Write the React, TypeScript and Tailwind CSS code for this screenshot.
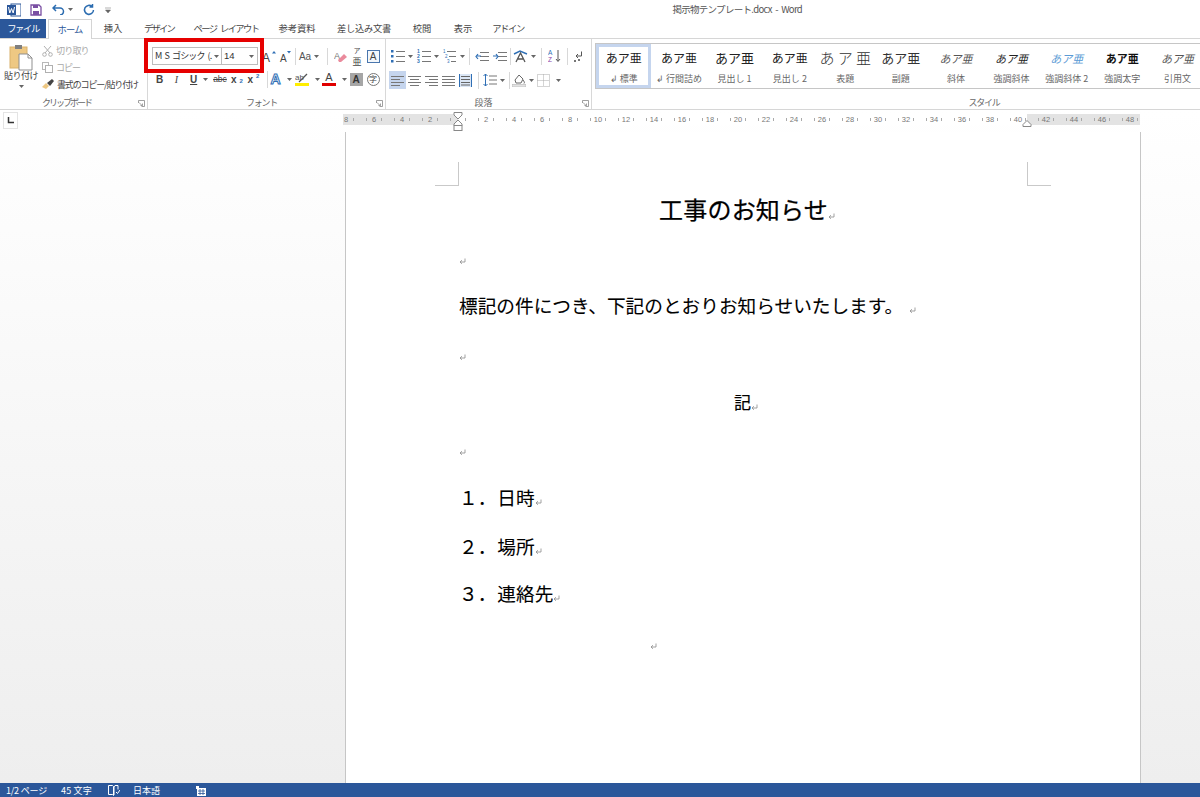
import React from 'react';

const FONT = "font-['Noto_Sans_CJK_JP','Noto_Sans',sans-serif]";

const tabs = [
  { label: '挿入', w: 'w-[42px]', track: '' },
  { label: 'デザイン', w: 'w-[50px]', track: 'tracking-[-1.800px]' },
  { label: 'ページ レイアウト', w: 'w-[84px]', track: 'tracking-[-1.600px] [word-spacing:3px]' },
  { label: '参考資料', w: 'w-[58px]', track: '' },
  { label: '差し込み文書', w: 'w-[76px]', track: 'tracking-[-0.300px]' },
  { label: '校閲', w: 'w-[40px]', track: '' },
  { label: '表示', w: 'w-[42px]', track: '' },
  { label: 'アドイン', w: 'w-[48px]', track: 'tracking-[-1.400px]' },
];

const styles = [
  { top: 'あア亜', sub: '↲ 標準', cls: 'text-[12px] text-[#222]' },
  { top: 'あア亜', sub: '↲ 行間詰め', cls: 'text-[12px] text-[#222]' },
  { top: 'あア亜', sub: '見出し 1', cls: 'text-[13px] text-[#222]' },
  { top: 'あア亜', sub: '見出し 2', cls: 'text-[12px] text-[#222]' },
  { top: 'あ ア 亜', sub: '表題', cls: 'text-[15px] text-[#333] font-light' },
  { top: 'あア亜', sub: '副題', cls: 'text-[13px] text-[#333]' },
  { top: 'あア亜', sub: '斜体', cls: 'text-[11px] italic text-[#555]' },
  { top: 'あア亜', sub: '強調斜体', cls: 'text-[11px] italic text-[#222]' },
  { top: 'あア亜', sub: '強調斜体 2', cls: 'text-[11px] italic text-[#5b9bd5]' },
  { top: 'あア亜', sub: '強調太字', cls: 'text-[11px] font-bold text-[#111]' },
  { top: 'あア亜', sub: '引用文', cls: 'text-[11px] italic text-[#555]' },
];

const Caret = () => (
  <svg width="5" height="3" viewBox="0 0 5 3" className="shrink-0">
    <path d="M0 0h5L2.5 3z" fill="#666" />
  </svg>
);

const Sep = ({ className = '' }: { className?: string }) => <div className={`w-px h-[17px] bg-[#d8d8d8] shrink-0 ${className}`} />;

const Cell = ({ w, children, className = '' }: { w: string; children?: React.ReactNode; className?: string }) => (
  <div className={`${w} h-[18px] flex items-center justify-center gap-[3px] shrink-0 ${className}`}>{children}</div>
);

// lines used for list and alignment buttons
const Lines = ({ kind }: { kind: 'left' | 'center' | 'right' | 'justify' }) => {
  const rows = [
    [0, 13],
    kind === 'left' ? [0, 9] : kind === 'center' ? [2, 11] : kind === 'right' ? [4, 13] : [0, 13],
    [0, 13],
    kind === 'left' ? [0, 9] : kind === 'center' ? [2, 11] : kind === 'right' ? [4, 13] : [0, 13],
  ];
  return (
    <svg width="13" height="11" viewBox="0 0 13 11">
      {rows.map((r, i) => (
        <rect key={i} x={r[0]} y={i * 3 + 1} width={r[1] - r[0]} height="1" fill="#777" />
      ))}
    </svg>
  );
};

const ListIcon = ({ kind = 'bullet' }: { kind?: 'bullet' | 'number' | 'multi' }) => (
  <svg width="14" height="13" viewBox="0 0 14 13" className="overflow-visible">
    {[1, 6, 11].map((y, i) => (
      <g key={y}>
        {kind === 'bullet' && <rect x="0" y={y - 1} width="2.500" height="2.500" fill="#2f6fb5" />}
        {kind === 'number' && (
          <text x="0" y={y + 1.500} fontSize="5" fontWeight="bold" fill="#2f6fb5" fontFamily="Liberation Sans">
            {i + 1}
          </text>
        )}
        {kind === 'multi' && (
          <text x={i * 2} y={y + 1.500} fontSize="4.500" fill="#2f6fb5" fontFamily="Liberation Sans">
            {i + 1}
          </text>
        )}
        <rect x={kind === 'multi' ? i * 2 + 4 : 5} y={y} width={kind === 'multi' ? 9 - i * 2 : 9} height="1" fill="#777" />
      </g>
    ))}
  </svg>
);

const IndentIcon = ({ flip = false }: { flip?: boolean }) => (
  <svg width="14" height="11" viewBox="0 0 14 11">
    {[1, 5, 9].map(y => (
      <rect key={y} x="5" y={y} width="9" height="1" fill="#777" />
    ))}
    <path d={flip ? 'M0 5h5M3 3l2 2.5L3 8' : 'M6 5H1M3 3L1 5.5 3 8'} stroke="#2f6fb5" strokeWidth="1.200" fill="none" />
  </svg>
);

const Ret = () => (
  <svg width="7" height="7" viewBox="0 0 7 7" className="inline-block shrink-0">
    <path d="M6 0.500V4H1.200M3 2.200L1 4l2 1.800" stroke="#8a8a8a" strokeWidth="0.800" fill="none" />
  </svg>
);

const Launcher = () => (
  <svg width="7" height="7" viewBox="0 0 7 7" className="shrink-0">
    <path d="M0.500 3V0.500H6.500V6.500H3.500" stroke="#888" strokeWidth="0.800" fill="none" />
    <path d="M1 2.500l3 3M4.500 3.500v2h-2" stroke="#888" strokeWidth="0.800" fill="none" />
  </svg>
);

const GroupLabel = ({ text, launcher = true, className = '' }: { text: string; launcher?: boolean; className?: string }) => (
  <div className="h-[14px] pt-[2px] relative flex items-center justify-center text-[9px] text-[#666]">
    <span className={className}>{text}</span>
    {launcher && (
      <span className="absolute right-[2px] top-[5px] flex">
        <Launcher />
      </span>
    )}
  </div>
);

const ClipboardGroup = () => (
  <div className="w-[148px] shrink-0 flex flex-col border-r border-[#d8d8d8]">
    <div className="flex-1 flex pl-[2px]">
      <div className="w-[38px] pt-[5px] flex flex-col items-center">
        <svg width="24" height="27" viewBox="0 0 24 27">
          <rect x="1" y="3" width="17" height="21" fill="#eec883" stroke="#d9b26c" />
          <rect x="6" y="1" width="7" height="4" fill="#7f7f7f" />
          <path d="M10 10h9l4 4v12H10z" fill="#fff" stroke="#8f8f8f" />
          <path d="M19 10v4h4" fill="none" stroke="#8f8f8f" />
        </svg>
        <div className="text-[9px] text-[#444] leading-[10px] whitespace-nowrap tracking-[-0.500px]">貼り付け</div>
        <div className="mt-[4px] flex">
          <Caret />
        </div>
      </div>
      <div className="flex flex-col pl-[2px] pt-[3px] text-[9px] leading-[17px]">
        <div className="flex items-center gap-[3px] text-[#a8a8a8] h-[17px] tracking-[-0.800px]">
          <svg width="11" height="12" viewBox="0 0 11 12">
            <path d="M2 1l6 7M9 1L3 8" stroke="#b0b0b0" fill="none" />
            <circle cx="2.500" cy="9.500" r="1.800" stroke="#b0b0b0" fill="none" />
            <circle cx="8.500" cy="9.500" r="1.800" stroke="#b0b0b0" fill="none" />
          </svg>
          切り取り
        </div>
        <div className="flex items-center gap-[3px] text-[#a8a8a8] h-[17px] tracking-[-1px]">
          <svg width="11" height="11" viewBox="0 0 11 11">
            <rect x="0.500" y="0.500" width="6" height="7" fill="#fff" stroke="#b8b8b8" />
            <rect x="3.500" y="3.500" width="7" height="7" fill="#fff" stroke="#b0b0b0" />
          </svg>
          コピー
        </div>
        <div className="flex items-center gap-[3px] text-[#444] h-[17px] whitespace-nowrap tracking-[-1.150px]">
          <svg width="12" height="11" viewBox="0 0 12 11">
            <path d="M0 8l4-4 3 3-3 3z" fill="#eec883" />
            <path d="M5 4l5-4 2 2-4 5z" fill="#444" />
          </svg>
          書式のコピー/貼り付け
        </div>
      </div>
    </div>
    <GroupLabel text="クリップボード" className="pr-[14px] tracking-[-2px]" />
  </div>
);

const FontGroup = () => (
  <div className="w-[238px] shrink-0 flex flex-col border-r border-[#d8d8d8]">
    <div className="flex-1 flex flex-col pt-[8px] gap-[5px]">
      <div className="flex items-center h-[18px] pl-[4px]">
        <div className="w-[70px] h-[18px] border border-[#bdbdbd] flex items-center justify-between pl-[2px] pr-[2px] text-[9px] text-[#333] whitespace-nowrap tracking-[-0.900px] [word-spacing:2px]">
          <span>M S ゴシック (.</span>
          <Caret />
        </div>
        <div className="w-[36px] h-[18px] border border-l-0 border-[#bdbdbd] flex items-center justify-between pl-[2px] pr-[3px] text-[9.500px] text-[#333] font-['Liberation_Sans',sans-serif]">
          <span>14</span>
          <Caret />
        </div>
        <Cell w="w-[17px]" className="ml-[3px]">
          <svg width="15" height="13" viewBox="0 0 15 13" className="overflow-visible">
            <text x="0" y="12" fontSize="12" fill="#444" fontFamily="Liberation Sans">A</text>
            <path d="M10 3.500l2-2.500 2 2.500z" fill="#2f6fb5" />
          </svg>
        </Cell>
        <Cell w="w-[16px]">
          <svg width="14" height="13" viewBox="0 0 14 13">
            <text x="1" y="12" fontSize="10" fill="#444" fontFamily="Liberation Sans">A</text>
            <path d="M8 1h4L10 3.500z" fill="#2f6fb5" />
          </svg>
        </Cell>
        <Sep className="ml-[1px]" />
        <Cell w="w-[26px]" className="text-[10px] text-[#555] font-['Liberation_Sans',sans-serif]">
          Aa <Caret />
        </Cell>
        <Sep className="ml-[5px]" />
        <Cell w="w-[22px]" className="ml-[2px]">
          <svg width="14" height="13" viewBox="0 0 14 13">
            <text x="0" y="9" fontSize="9" fill="#777" fontFamily="Liberation Sans">A</text>
            <path d="M4 10l6-6 3 3-6 5H5z" fill="#ea8a9c" />
          </svg>
        </Cell>
        <Cell w="w-[10px]" className="text-[9px] text-[#444] flex-col gap-0 leading-[8px]">
          <span className="text-[7px] leading-[7px]">ア</span>
          <span className="leading-[9px]">亜</span>
        </Cell>
        <Cell w="w-[22px]">
          <span className="w-[13px] h-[13px] border border-[#4a76ad] bg-[#f3f7fb] flex items-center justify-center text-[10px] text-[#444] font-['Liberation_Sans',sans-serif]">
            A
          </span>
        </Cell>
      </div>
      <div className="flex items-center h-[18px] pl-[3px] text-[#444] font-['Liberation_Sans',sans-serif]">
        <Cell w="w-[17px]" className="text-[10px] font-bold">B</Cell>
        <Cell w="w-[17px]" className="text-[10px] italic font-['Liberation_Serif',serif]">I</Cell>
        <Cell w="w-[26px]" className="text-[10px] justify-start pl-[5px]">
          <span className="underline font-bold">U</span>
          <span className="ml-[3px] flex"><Caret /></span>
        </Cell>
        <Cell w="w-[18px]" className="text-[8.500px] line-through">abc</Cell>
        <Cell w="w-[16px]" className="text-[10px] font-bold gap-0">
          x<sub className="text-[6px] text-[#2f6fb5]">2</sub>
        </Cell>
        <Cell w="w-[17px]" className="text-[10px] font-bold gap-0">
          x<sup className="text-[6px] text-[#2f6fb5]">2</sup>
        </Cell>
        <Sep className="ml-[5px]" />
        <Cell w="w-[26px]">
          <span className="text-[14px] font-bold text-white [-webkit-text-stroke:1px_#2f6fb5]">A</span>
          <span className="ml-[3px] flex"><Caret /></span>
        </Cell>
        <Cell w="w-[27px]">
          <svg width="14" height="14" viewBox="0 0 14 14">
            <text x="0" y="8" fontSize="8" fill="#555" fontFamily="Liberation Sans">ab</text>
            <path d="M4 10l8-8" stroke="#555" strokeWidth="1.200" />
            <rect x="0" y="11" width="14" height="3" fill="#ffee00" />
          </svg>
          <span className="ml-[3px] flex"><Caret /></span>
        </Cell>
        <Cell w="w-[27px]">
          <span className="flex flex-col items-center text-[11px] leading-[11px] text-[#444] w-[14px]">
            A
            <span className="w-[14px] h-[3px] bg-[#e00000]" />
          </span>
          <span className="ml-[3px] flex"><Caret /></span>
        </Cell>
        <Cell w="w-[16px]">
          <span className="w-[13px] h-[13px] bg-[#a6a6a6] flex items-center justify-center text-[10px] font-bold text-[#333]">A</span>
        </Cell>
        <Cell w="w-[18px]">
          <span className={`w-[13px] h-[13px] rounded-full border border-[#777] flex items-center justify-center text-[8px] text-[#444] ${FONT}`}>字</span>
        </Cell>
      </div>
    </div>
    <GroupLabel text="フォント" className="pr-[10px] tracking-[-1.300px]" />
  </div>
);

const ParagraphGroup = () => (
  <div className="w-[206px] shrink-0 flex flex-col border-r border-[#d8d8d8]">
    <div className="flex-1 flex flex-col pt-[8px] gap-[6px]">
      <div className="flex items-center h-[18px] pl-[3px]">
        <Cell w="w-[26px]"><ListIcon /><Caret /></Cell>
        <Cell w="w-[26px]"><ListIcon kind="number" /><Caret /></Cell>
        <Cell w="w-[26px]"><ListIcon kind="multi" /><Caret /></Cell>
        <Sep className="ml-[2px]" />
        <Cell w="w-[18px]" className="ml-[3px]"><IndentIcon /></Cell>
        <Cell w="w-[17px]"><IndentIcon flip /></Cell>
        <Sep className="ml-[2px]" />
        <Cell w="w-[26px]">
          <svg width="15" height="13" viewBox="0 0 15 13">
            <path d="M1 4l6-3 7 3" stroke="#2f6fb5" strokeWidth="1.400" fill="none" />
            <path d="M3 12l4.500-9L12 12M5 9h5" stroke="#555" strokeWidth="1.300" fill="none" />
          </svg>
          <Caret />
        </Cell>
        <Sep className="ml-[4px]" />
        <Cell w="w-[25px]">
          <svg width="14" height="14" viewBox="0 0 14 14">
            <text x="0" y="6" fontSize="6.500" fill="#2f6fb5" fontFamily="Liberation Sans">A</text>
            <text x="0" y="13" fontSize="6.500" fill="#8a3fa8" fontFamily="Liberation Sans">Z</text>
            <path d="M10 1v11M8 10l2 2.500L12 10" stroke="#555" fill="none" />
          </svg>
        </Cell>
        <Sep />
        <Cell w="w-[20px]">
          <svg width="10" height="11" viewBox="0 0 10 11">
            <path d="M8.500 0.500V5H3M5 3L3 5l2 2" stroke="#555" fill="none" />
            <rect x="1" y="9" width="2" height="2" fill="#777" />
            <rect x="5" y="8" width="2" height="2" fill="#777" />
          </svg>
        </Cell>
      </div>
      <div className="flex items-center h-[18px] pl-[3px]">
        <Cell w="w-[17px]" className="bg-[#c5d5ee]"><Lines kind="left" /></Cell>
        <Cell w="w-[17px]"><Lines kind="center" /></Cell>
        <Cell w="w-[17px]"><Lines kind="right" /></Cell>
        <Cell w="w-[17px]"><Lines kind="justify" /></Cell>
        <Cell w="w-[17px]">
          <svg width="13" height="13" viewBox="0 0 13 13">
            <rect x="0" y="0" width="13" height="13" fill="#dbe6f5" />
            <path d="M0.500 0v13M12.500 0v13" stroke="#2f6fb5" />
            <path d="M2 2.500h9M2 5.500h9M2 8.500h9M2 11h9" stroke="#666" />
          </svg>
        </Cell>
        <div className="w-[4px]" />
        <Sep />
        <Cell w="w-[29px]">
          <svg width="14" height="14" viewBox="0 0 14 14">
            <path d="M2.500 1v12M0.500 3l2-2 2 2M0.500 11l2 2 2-2" stroke="#2f6fb5" fill="none" />
            <path d="M6 3h8M6 7h8M6 11h8" stroke="#777" />
          </svg>
          <Caret />
        </Cell>
        <Sep className="ml-[1px]" />
        <Cell w="w-[26px]">
          <svg width="14" height="14" viewBox="0 0 14 14">
            <path d="M3 7l4-5 4 4-2 4H4z" fill="#fff" stroke="#666" />
            <path d="M11 7c1 1.500 2 2.500 1 3.500" stroke="#666" fill="none" />
            <rect x="0" y="11.500" width="14" height="2.500" fill="#e3e3e3" stroke="#aaa" strokeWidth="0.500" />
          </svg>
          <Caret />
        </Cell>
        <Cell w="w-[26px]">
          <svg width="13" height="13" viewBox="0 0 13 13">
            <path d="M0.500 0.500h12v12h-12zM6.500 0.500v12M0.500 6.500h12" stroke="#aaa" strokeDasharray="1 1" fill="none" />
          </svg>
          <span className="ml-[3px] flex"><Caret /></span>
        </Cell>
      </div>
    </div>
    <GroupLabel text="段落" className="pr-[10px]" />
  </div>
);

const StylesGroup = () => (
  <div className="flex-1 min-w-0 flex flex-col">
    <div className="flex-1 pt-[4px] pl-[3px]">
      <div className="h-[46px] border-y border-l border-[#c6c6c6] flex overflow-hidden">
        {styles.map((s, i) => (
          <div
            key={s.sub}
            className={`w-[55.400px] h-[44px] shrink-0 flex flex-col items-center text-[9px] text-[#666] ${
              i === 0 ? 'border-[3px] border-[#c5d5ee]' : 'pt-[3px]'
            }`}
          >
            <div className={`h-[22px] leading-[22px] whitespace-nowrap ${s.cls}`}>{s.top}</div>
            <div className="leading-[14px] mt-[3px] whitespace-nowrap">{s.sub}</div>
          </div>
        ))}
      </div>
    </div>
    <div className="pl-[176px]">
      <GroupLabel text="スタイル" launcher={false} className="tracking-[-1.300px]" />
    </div>
  </div>
);

const Ruler = () => {
  const left = ['8', '6', '4', '2'];
  const right = Array.from({ length: 24 }, (_, i) => String((i + 1) * 2));
  const labels = [...left, '', ...right];
  return (
    <div className="flex h-[15px] mt-[2px]">
      <div className="ml-[3px] w-[15px] h-[17px] bg-white border border-[#e4e4e4] flex items-center justify-center">
        <svg width="7" height="7" viewBox="0 0 7 7">
          <path d="M1.500 0v5.500H7" stroke="#333" strokeWidth="1.500" fill="none" />
        </svg>
      </div>
      <div className="ml-[325px] w-[797px] h-[15px] relative">
        <div className="mt-[2px] h-[11px] relative overflow-hidden bg-[#e3e3e3]">
          <div className="absolute left-[115px] w-[569px] top-0 bottom-0 bg-white" />
          <div className="absolute left-[-11px] top-0 bottom-0 flex">
            {labels.map((l, i) => (
              <div key={i} className="w-[28px] shrink-0 flex items-center justify-between px-[6px] text-[7.500px] text-[#777] font-['Liberation_Sans',sans-serif]">
                <span className="w-px h-[3px] bg-[#aaa]" />
                <span>{l}</span>
                <span className="w-px h-[3px] bg-[#aaa]" />
              </div>
            ))}
          </div>
        </div>
        <svg width="10" height="19" viewBox="0 0 10 19" className="absolute left-[110px] top-0">
          <path d="M1 0.500h8V3L5 7 1 3z" fill="#fff" stroke="#888" />
          <path d="M5 8l4 4v1.500H1V12z" fill="#fff" stroke="#888" />
          <rect x="1" y="13.500" width="8" height="5" fill="#fff" stroke="#888" />
        </svg>
        <svg width="10" height="7" viewBox="0 0 10 7" className="absolute left-[679px] top-[8px]">
          <path d="M5 0.500l4 4v2H1v-2z" fill="#fff" stroke="#888" />
        </svg>
      </div>
    </div>
  );
};

const Line = ({ h, className = '', children }: { h: string; className?: string; children?: React.ReactNode }) => (
  <div className={`${h} flex items-center ${className}`}>{children}</div>
);

const ListLine = ({ no, text, h, className = '' }: { no: string; text: string; h: string; className?: string }) => (
  <Line h={h} className={`whitespace-pre ${className}`}>
    {no}
    <span className="ml-[1px]">{text}</span>
    <span className="mt-[6px]"><Ret /></span>
  </Line>
);

const Page = () => (
  <div className="ml-[345px] mt-[5px] w-[796px] flex-1 bg-white border-x border-[#c6c6c6] text-black">
    <div className="flex justify-between px-[89px] pt-[30px]">
      <div className="w-[24px] h-[24px] border-r border-b border-[#c9c9c9]" />
      <div className="w-[24px] h-[24px] border-l border-b border-[#c9c9c9]" />
    </div>
    <div className="pl-[113px] pr-[112px] text-[18.670px] leading-[28px] [-webkit-text-stroke:0.100px_black]">
      <Line h="h-[46px]" className="justify-center pl-[7px] text-[24px] tracking-[0.200px] [-webkit-text-stroke:0.250px_black]">
        工事のお知らせ
        <span className="mt-[8px]"><Ret /></span>
      </Line>
      <Line h="h-[28px]" className="mt-[15px]"><Ret /></Line>
      <Line h="h-[48px]" className="mt-[6px] whitespace-nowrap">
        標記の件につき、下記のとおりお知らせいたします。
        <span className="mt-[6px] ml-[6px]"><Ret /></span>
      </Line>
      <Line h="h-[48px]" className="mt-[4px]"><Ret /></Line>
      <Line h="h-[42px]" className="justify-center pl-[5px] text-[17px] [-webkit-text-stroke:0.200px_black]">
        記<span className="mt-[6px]"><Ret /></span>
      </Line>
      <Line h="h-[58px]"><Ret /></Line>
      <ListLine no="１．" text="日時" h="h-[31px]" />
      <ListLine no="２．" text="場所" h="h-[48px]" className="mt-[10px]" />
      <ListLine no="３．" text="連絡先" h="h-[46px]" />
      <Line h="h-[50px]" className="pl-[191px] mt-[5px]"><Ret /></Line>
    </div>
  </div>
);

export default function App() {
  return (
    <div className={`w-[1200px] h-[797px] relative flex flex-col overflow-hidden bg-white ${FONT}`}>
      {/* title bar */}
      <div className="h-[19px] shrink-0 flex items-center pl-[7px]">
        <svg width="14" height="14" viewBox="0 0 14 14">
          <rect x="4" y="1" width="10" height="12" fill="#fff" stroke="#2b579a" />
          <rect x="0" y="2" width="9" height="10" fill="#2b579a" />
          <path d="M1.500 4l1.300 6L4.500 5.500 6.200 10l1.300-6" stroke="#fff" fill="none" />
        </svg>
        <svg width="12" height="12" viewBox="0 0 12 12" className="ml-[9px]">
          <path d="M1 1h8l2 2v8H1z" fill="#fff" stroke="#7a4fa3" strokeWidth="1.300" />
          <rect x="3" y="1" width="5" height="3" fill="#7a4fa3" />
          <rect x="3" y="7" width="6" height="4" fill="#7a4fa3" />
        </svg>
        <svg width="13" height="11" viewBox="0 0 13 11" className="ml-[10px]">
          <path d="M4 1L1 4l3 3M1 4h7a3.500 3.500 0 0 1 0 7" stroke="#2b6cb0" strokeWidth="1.500" fill="none" />
        </svg>
        <span className="ml-[3px] flex"><Caret /></span>
        <svg width="12" height="12" viewBox="0 0 12 12" className="ml-[10px]">
          <path d="M9 2.500A4.500 4.500 0 1 0 10.500 6M9.500 0v3h-3" stroke="#2b6cb0" strokeWidth="1.500" fill="none" />
        </svg>
        <svg width="6" height="6" viewBox="0 0 6 6" className="ml-[10px]">
          <path d="M0 1h6M0.500 3h5L3 6z" fill="#666" stroke="#666" strokeWidth="0.500" />
        </svg>
        <div className="ml-auto mr-[398px] text-[9.500px] text-[#555] tracking-[-0.700px] [word-spacing:2px]">掲示物テンプレート.docx - Word</div>
      </div>

      {/* tabs */}
      <div className="h-[19px] shrink-0 flex text-[9.300px] text-[#444] relative z-10">
        <div className="w-[46px] h-[19px] bg-[#2b579a] text-white flex items-center justify-center tracking-[-1.400px]">ファイル</div>
        <div className="ml-[2px] w-[44px] h-[20px] bg-white border border-b-0 border-[#d4d4d4] text-[#2b579a] flex items-center justify-center tracking-[-0.800px]">
          ホーム
        </div>
        {tabs.map(t => (
          <div key={t.label} className={`${t.w} ${t.track} flex items-center justify-center whitespace-nowrap`}>
            {t.label}
          </div>
        ))}
      </div>

      {/* ribbon */}
      <div className="h-[72px] shrink-0 flex border-y border-[#d6d6d6] bg-white">
        <ClipboardGroup />
        <FontGroup />
        <ParagraphGroup />
        <StylesGroup />
      </div>

      {/* workspace */}
      <div className="flex-1 min-h-0 flex flex-col bg-gradient-to-b from-white to-[#eeeeee]">
        <Ruler />
        <Page />
      </div>

      {/* status bar */}
      <div className="h-[14px] shrink-0 bg-[#2b579a] text-white text-[9px] flex items-center pl-[6px] pt-px">
        <span className="tracking-[-0.200px]">1/2 ページ</span>
        <span className="ml-[14px] tracking-[0.200px]">45 文字</span>
        <svg width="12" height="11" viewBox="0 0 12 11" className="ml-[16px]">
          <path d="M0.500 0.500h4l1 1v9l-1-1h-4zM6 2l1-1.500h3v4M6 2v8" stroke="#fff" fill="none" />
          <path d="M8 7l1.500 1.500L12 5" stroke="#fff" fill="none" />
        </svg>
        <span className="ml-[13px]">日本語</span>
        <svg width="11" height="10" viewBox="0 0 11 10" className="ml-[36px]">
          <rect x="1" y="2" width="9" height="8" fill="#fff" />
          <rect x="0" y="0" width="3" height="3" fill="#fff" />
          <path d="M2 5h7M2 7.500h7M4 3v6M7 3v6" stroke="#2b579a" strokeWidth="0.800" />
        </svg>
      </div>

      {/* red highlight round the font name and size */}
      <div className="absolute left-[144px] top-[38px] w-[120px] h-[35px] border-[4px] border-[#e60000] pointer-events-none" />
    </div>
  );
}
